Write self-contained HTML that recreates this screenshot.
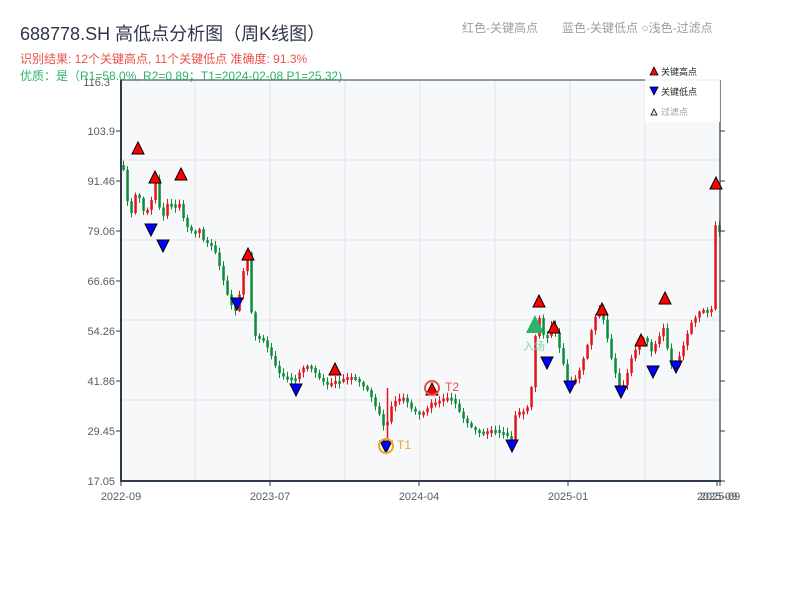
<!DOCTYPE html>
<html><head><meta charset="utf-8">
<style>
body{margin:0;background:#fff;width:800px;height:600px;overflow:hidden;font-family:"Liberation Sans","Noto Sans CJK SC",sans-serif;}
svg text{font-family:"Liberation Sans","Noto Sans CJK SC",sans-serif;}
</style></head><body>
<svg id="s" width="800" height="600" xmlns="http://www.w3.org/2000/svg">
<rect x="121" y="80" width="600" height="401" fill="#f7f8fa"/>
<g stroke="#e2e4ea" stroke-width="1">
<line x1="195" y1="80" x2="195" y2="481"/><line x1="270" y1="80" x2="270" y2="481"/>
<line x1="345" y1="80" x2="345" y2="481"/><line x1="420" y1="80" x2="420" y2="481"/>
<line x1="495" y1="80" x2="495" y2="481"/><line x1="570" y1="80" x2="570" y2="481"/>
<line x1="645" y1="80" x2="645" y2="481"/>
<line x1="121" y1="160" x2="721" y2="160"/><line x1="121" y1="240" x2="721" y2="240"/>
<line x1="121" y1="320" x2="721" y2="320"/><line x1="121" y1="400" x2="721" y2="400"/>
</g>
<g id="c"></g>
<line x1="387.5" y1="388" x2="387.5" y2="440" stroke="#e0141c" stroke-width="1.5"/>
<g stroke="#2d3a4a" stroke-width="2" fill="none">
<line x1="121" y1="80" x2="121" y2="482"/><line x1="120" y1="481" x2="721" y2="481"/>
<line x1="120" y1="80" x2="720" y2="80" stroke-width="1"/>
<line x1="720" y1="80" x2="720" y2="481" stroke-width="1.2"/>
</g>
<g stroke="#2d3a4a" stroke-width="1">
<line x1="121" y1="481" x2="121" y2="486"/><line x1="270" y1="481" x2="270" y2="486"/>
<line x1="419" y1="481" x2="419" y2="486"/><line x1="568" y1="481" x2="568" y2="486"/>
<line x1="717" y1="481" x2="717" y2="486"/><line x1="720" y1="481" x2="720" y2="486"/>
<line x1="116" y1="131" x2="121" y2="131"/><line x1="116" y1="181" x2="121" y2="181"/>
<line x1="116" y1="231" x2="121" y2="231"/><line x1="116" y1="281" x2="121" y2="281"/>
<line x1="116" y1="331" x2="121" y2="331"/><line x1="116" y1="381" x2="121" y2="381"/>
<line x1="116" y1="431" x2="121" y2="431"/>
<line x1="720" y1="131" x2="725" y2="131"/><line x1="720" y1="181" x2="725" y2="181"/>
<line x1="720" y1="231" x2="725" y2="231"/><line x1="720" y1="281" x2="725" y2="281"/>
<line x1="720" y1="331" x2="725" y2="331"/><line x1="720" y1="381" x2="725" y2="381"/>
<line x1="720" y1="431" x2="725" y2="431"/><line x1="720" y1="481" x2="725" y2="481"/>
</g>
<g font-size="11" fill="#555c66" text-anchor="end">
<text x="110" y="86">116.3</text><text x="115" y="135">103.9</text><text x="115" y="185">91.46</text>
<text x="115" y="235">79.06</text><text x="115" y="285">66.66</text><text x="115" y="335">54.26</text>
<text x="115" y="385">41.86</text><text x="115" y="435">29.45</text><text x="115" y="485">17.05</text>
</g>
<g font-size="11" fill="#555c66" text-anchor="middle">
<text x="121" y="500">2022-09</text><text x="270" y="500">2023-07</text><text x="419" y="500">2024-04</text>
<text x="568" y="500">2025-01</text><text x="717" y="500">2025-09</text><text x="720" y="500">2025-09</text>
</g>
<rect x="645" y="62" width="75" height="60" fill="#fff" opacity="0.9"/>
<polygon points="650,75 654,67 658,75" fill="#f00" stroke="#000" stroke-width="0.8"/>
<text x="661" y="75" font-size="9" fill="#222">关键高点</text>
<polygon points="650,87 654,95 658,87" fill="#00f" stroke="#000" stroke-width="0.8"/>
<text x="661" y="95" font-size="9" fill="#222">关键低点</text>
<polygon points="651,115 654,109 657,115" fill="#fdd" stroke="#000" stroke-width="0.8"/>
<text x="661" y="115" font-size="9" fill="#999">过滤点</text>
<g id="m"></g>
<polygon points="526,333 535,315 544,333" fill="#2db46a"/>
<text x="523" y="350" font-size="11" fill="#7fd3a0">入场</text>
<circle cx="386" cy="446" r="7" fill="none" stroke="#f5a623" stroke-width="2"/>
<text x="397" y="449" font-size="12" fill="#f5a623">T1</text>
<circle cx="432" cy="388" r="7" fill="none" stroke="#e8534a" stroke-width="2"/>
<text x="445" y="391" font-size="12" fill="#e8534a">T2</text>
<text x="20" y="40" font-size="18" fill="#2d3748">688778.SH 高低点分析图（周K线图）</text>
<text x="20" y="63" font-size="12" fill="#e8534a">识别结果: 12个关键高点, 11个关键低点  准确度: 91.3%</text>
<text x="20" y="80" font-size="12" fill="#2fb36a">优质：是（R1=58.0%, R2=0.89；T1=2024-02-08 P1=25.32)</text>
<text x="462" y="32" font-size="12" fill="#9a9ea6">红色-关键高点</text>
<text x="562" y="32" font-size="12" fill="#9a9ea6">蓝色-关键低点 ○浅色-过滤点</text>
</svg>
<script>
(function(){
var NS='http://www.w3.org/2000/svg';
function el(parent,tag,attrs){var e=document.createElementNS(NS,tag);for(var k in attrs)e.setAttribute(k,attrs[k]);parent.appendChild(e);}
var K=[[122,165],[126,172],[130,205],[134,180],[138,160],[142,195],[146,205],[151,218],[155,190],[159,225],[163,238],[168,215],[172,205],[177,195],[181,180],[185,200],[190,212],[195,230],[200,238],[205,260],[210,262],[215,262],[220,268],[225,275],[230,285],[237,298],[242,275],[246,262],[249,258],[253,345],[258,350],[265,348],[272,352],[280,362],[288,370],[296,382],[303,378],[310,375],[318,376],[326,374],[335,372],[340,378],[347,383],[355,388],[363,390],[370,388],[377,400],[382,410],[386,430],[390,408],[396,406],[404,406],[412,412],[420,410],[426,402],[432,395],[438,400],[446,404],[454,408],[462,418],[470,420],[478,424],[486,430],[494,434],[500,438],[506,438],[512,442],[516,412],[520,405],[526,402],[531,395],[535,340],[539,318],[544,345],[548,348],[553,335],[558,345],[564,360],[569,376],[575,370],[582,360],[590,345],[596,330],[601,320],[606,335],[612,355],[617,368],[621,382],[626,370],[632,355],[637,352],[642,348],[647,352],[652,360],[657,345],[661,330],[665,315],[670,350],[675,358],[680,352],[686,345],[692,335],[697,330],[702,318],[707,312],[712,300],[715,215],[717,195],[720,210]];
function ip(x){for(var i=0;i<K.length-1;i++){if(x>=K[i][0]&&x<=K[i+1][0]){var t=(x-K[i][0])/(K[i+1][0]-K[i][0]);return K[i][1]+t*(K[i+1][1]-K[i][1]);}}return K[K.length-1][1];}
var g=document.getElementById('c');var prev=ip(122);
for(var x=122;x<=718;x+=4){var base=ip(x+2);var amp=3+(481-base)*0.07;var c=base+Math.sin(x*1.7)*amp;var o=prev;var up=c<o;var col=up?'#e0141c':'#0e8a3a';var bt=Math.min(o,c),bb=Math.max(o,c);if(bb-bt<3)bb=bt+3;var wt=bt-1-Math.abs(Math.sin(x*2.3))*4,wb=bb+1+Math.abs(Math.cos(x*1.3))*4;
el(g,'line',{x1:x+1.5,y1:wt,x2:x+1.5,y2:wb,stroke:col,'stroke-width':1});
el(g,'rect',{x:x+0.3,y:bt,width:2.5,height:bb-bt,fill:col});prev=c;}
var H=[[138,148],[155,177],[181,174],[248,254],[335,369],[432,389],[539,301],[554,327],[602,309],[641,340],[665,298],[716,183]];
var L=[[151,230],[163,246],[237,304],[296,390],[386,447],[512,446],[547,363],[570,387],[621,392],[653,372],[676,367]];
var m=document.getElementById('m');
H.forEach(function(p){el(m,'polygon',{points:(p[0]-6)+','+(p[1]+6)+' '+p[0]+','+(p[1]-6)+' '+(p[0]+6)+','+(p[1]+6),fill:'#f00',stroke:'#000','stroke-width':1});});
L.forEach(function(p){el(m,'polygon',{points:(p[0]-6)+','+(p[1]-6)+' '+p[0]+','+(p[1]+6)+' '+(p[0]+6)+','+(p[1]-6),fill:'#00f',stroke:'#000','stroke-width':1});});
})();
</script>
</body></html>
